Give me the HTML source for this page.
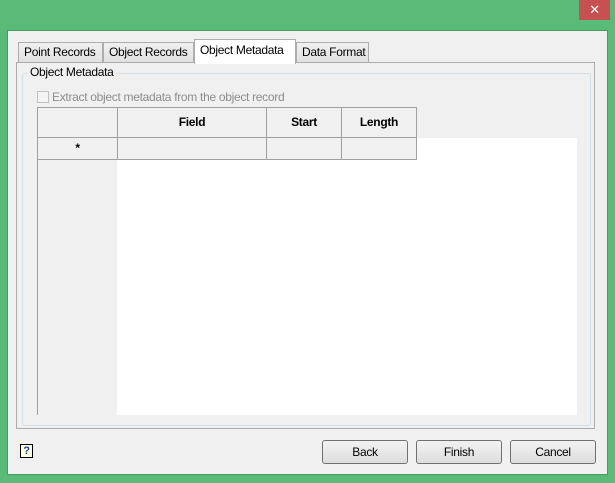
<!DOCTYPE html>
<html><head><style>
*{box-sizing:border-box;margin:0;padding:0}
body{width:615px;height:483px;background:#5aba77;position:relative;overflow:hidden;font-family:"Liberation Sans",sans-serif;font-size:12px;color:#000;letter-spacing:-0.3px}
.a{position:absolute;white-space:nowrap}
.client{left:7px;top:30px;width:601px;height:445px;background:#f0f0f0;border:1px solid #4a9a62}
.close{left:579px;top:0;width:31px;height:20px;background:#c75050;color:#fff;text-align:center;font-size:13px;line-height:20px}
.tab{position:absolute;top:42px;height:21px;border:1px solid #adadad;background:linear-gradient(#f0f0f0,#e1e1e1);line-height:19px;padding-left:5px;font-size:12px;white-space:nowrap;overflow:hidden}
.tab.sel{top:39px;height:25px;background:#fff;border-bottom:none;z-index:2}
.panel{left:16px;top:62px;width:579px;height:367px;border:1px solid #adadad;background:#f0f0f0}
.group{left:22px;top:73px;width:569px;height:353px;border:1px solid #d5dfe5;border-radius:3px}
.th{position:absolute;top:107px;height:31px;border:1px solid #a0a0a0;background:#f0f0f0;font-weight:bold;text-align:center;line-height:29px}
.td{position:absolute;top:137px;height:23px;border:1px solid #a0a0a0;background:#f0f0f0}
.btn{position:absolute;top:440px;width:86px;height:24px;border:1px solid #707070;border-radius:3px;background:linear-gradient(#f2f2f2,#dddddd);text-align:center;line-height:22px}
</style></head><body>
<div class="a close">✕</div>
<div class="a client"></div>
<div class="a panel"></div>
<div class="tab" style="left:18px;width:85px">Point Records</div>
<div class="tab" style="left:103px;width:91px">Object Records</div>
<div class="tab sel" style="left:194px;width:102px;line-height:21px">Object Metadata</div>
<div class="tab" style="left:296px;width:73px">Data Format</div>
<div class="a group"></div>
<div class="a" style="left:28px;top:65px;background:#f0f0f0;padding:0 2px">Object Metadata</div>
<div class="a" style="left:37px;top:91px;width:12px;height:12px;border:1px solid #c0c0c0;background:#f4f4f4"></div>
<div class="a" style="left:52px;top:90px;color:#8d8d8d">Extract object metadata from the object record</div>
<div class="a" style="left:37px;top:107px;width:540px;height:308px;background:#fff;border-left:1px solid #a0a0a0;border-top:1px solid #a0a0a0"></div>
<div class="a" style="left:37px;top:107px;width:540px;height:31px;background:#f0f0f0"></div>
<div class="a" style="left:37px;top:137px;width:80px;height:278px;background:#f0f0f0;border-left:1px solid #a0a0a0"></div>
<div class="th" style="left:37px;width:81px"></div>
<div class="th" style="left:117px;width:150px">Field</div>
<div class="th" style="left:266px;width:76px">Start</div>
<div class="th" style="left:341px;width:76px">Length</div>
<div class="td" style="left:37px;width:81px;text-align:center;font-weight:bold;line-height:21px">*</div>
<div class="td" style="left:117px;width:150px"></div>
<div class="td" style="left:266px;width:76px"></div>
<div class="td" style="left:341px;width:76px"></div>
<div class="a" style="left:20px;top:444px;width:13px;height:14px;border:1px solid #000;background:#ffffe0;font-size:11px;font-weight:bold;color:#1a3fa0;text-align:center;line-height:12px">?</div>
<div class="btn" style="left:322px">Back</div>
<div class="btn" style="left:416px">Finish</div>
<div class="btn" style="left:510px">Cancel</div>
</body></html>
